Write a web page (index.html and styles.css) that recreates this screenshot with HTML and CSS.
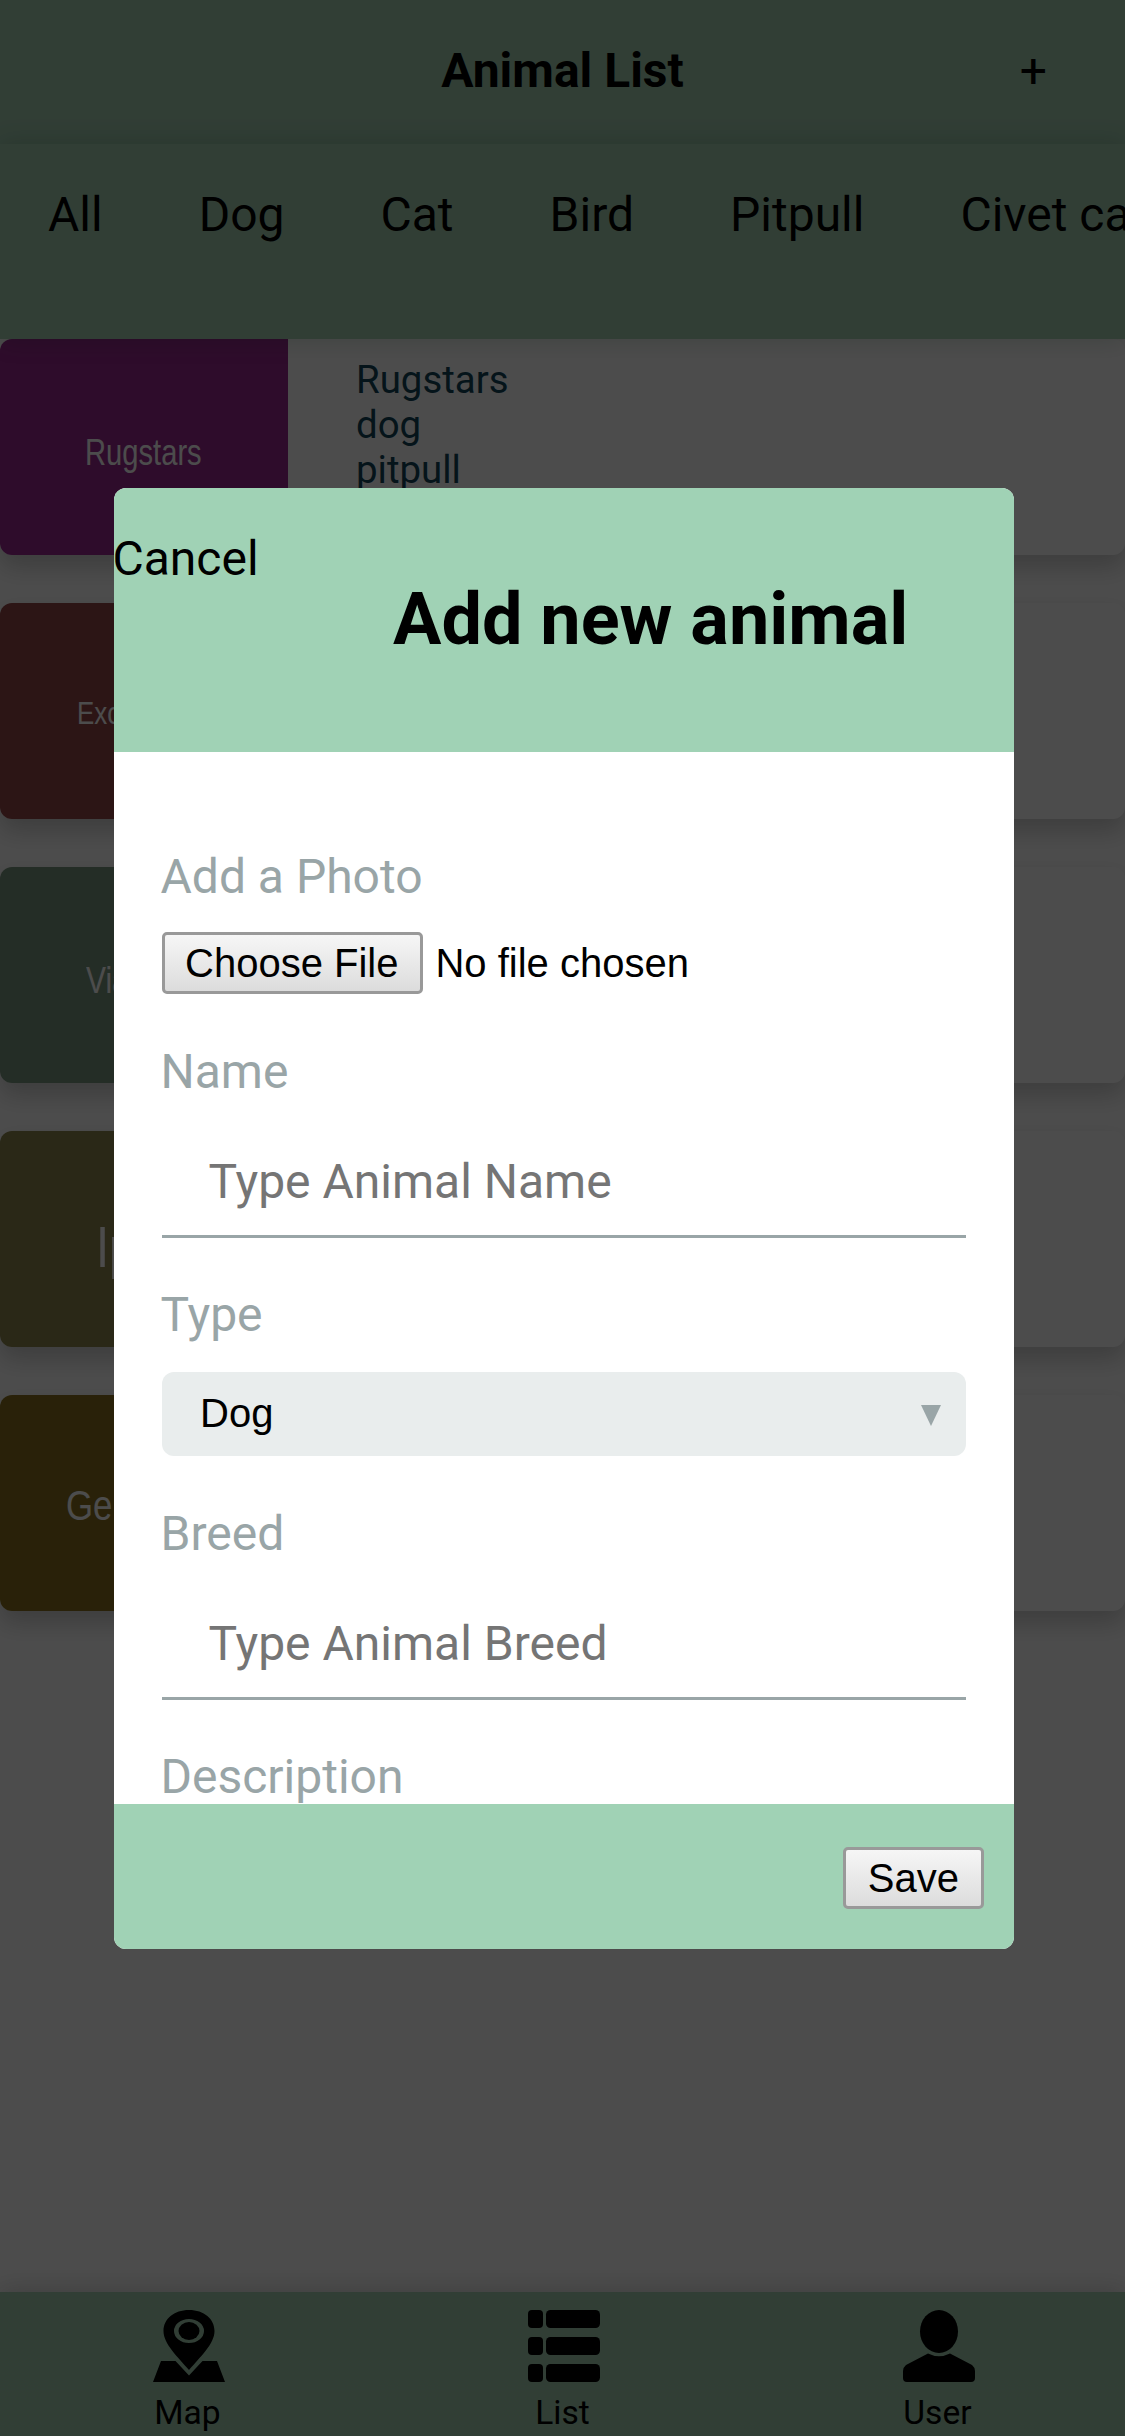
FILE: index.html
```html
<!DOCTYPE html>
<html lang="en">
<head>
<meta charset="utf-8">
<title>Animal List</title>
<link rel="stylesheet" href="styles.css">
</head>
<body>
<div class="app">
  <header class="topbar">
    <h1 class="topbar-title">Animal List</h1>
    <span class="topbar-add">+</span>
  </header>
  <nav class="filters">
    <span>All</span><span>Dog</span><span>Cat</span><span>Bird</span><span>Pitpull</span><span>Civet cat</span>
  </nav>
  <main class="list">
    <article class="card">
      <div class="thumb thumb-purple"><span>Rugstars</span></div>
      <div class="info"><p>Rugstars</p><p>dog</p><p>pitpull</p></div>
    </article>
    <article class="card"><div class="thumb thumb-red"><span>Exc</span></div></article>
    <article class="card"><div class="thumb thumb-green"><span>Via</span></div></article>
    <article class="card"><div class="thumb thumb-olive"><span>Ip</span></div></article>
    <article class="card"><div class="thumb thumb-gold"><span>Gen</span></div></article>
  </main>
  <nav class="tabbar">
    <div class="tab">
      <svg class="tab-icon" viewBox="0 0 72 72"><path fill-rule="evenodd" d="M36 0C21 0 10.500 9 10.500 21C10.500 34 25 47 36 60C47 47 61.500 34 61.500 21C61.500 9 51 0 36 0ZM36 9A15 12 0 0 1 36 33A15 12 0 0 1 36 9Z"/><ellipse cx="36" cy="21" rx="10.500" ry="9"/><path d="M8 51H22.500L36 65.500L49.500 51H64L72 72H0Z"/></svg>
      <span>Map</span>
    </div>
    <div class="tab">
      <svg class="tab-icon" viewBox="0 0 72 72"><rect width="15" height="18" rx="4"/><rect x="18" width="54" height="18" rx="4.500"/><rect y="27" width="15" height="18" rx="4"/><rect x="18" y="27" width="54" height="18" rx="4.500"/><rect y="54" width="15" height="18" rx="4"/><rect x="18" y="54" width="54" height="18" rx="4.500"/></svg>
      <span>List</span>
    </div>
    <div class="tab">
      <svg class="tab-icon" viewBox="0 0 72 72"><ellipse cx="36" cy="21.500" rx="19" ry="21.500"/><path d="M25 43.500Q36 49 47 43.500L69 55Q72 57.500 72 61V68Q72 72 68 72H4Q0 72 0 68V61Q0 57.500 3 55Z"/></svg>
      <span>User</span>
    </div>
  </nav>
</div>
<div class="backdrop">
  <section class="modal">
    <header class="modal-head">
      <span class="cancel">Cancel</span>
      <h2 class="modal-title">Add new animal</h2>
    </header>
    <form class="modal-body">
      <label class="label">Add a Photo</label>
      <div class="file"><button type="button" class="button button-file">Choose File</button><span>No file chosen</span></div>
      <label class="label label-name">Name</label>
      <input class="input" placeholder="Type Animal Name">
      <label class="label label-type">Type</label>
      <div class="select"><span>Dog</span><svg class="arrow" viewBox="0 0 20 21"><path d="M0 0H20L10 21Z"/></svg></div>
      <label class="label label-name">Breed</label>
      <input class="input" placeholder="Type Animal Breed">
      <label class="label label-type">Description</label>
    </form>
    <footer class="modal-foot"><button type="button" class="button">Save</button></footer>
  </section>
</div>
</body>
</html>
```
FILE: styles.css
```css
* { box-sizing: border-box; }
body {
  margin: 0;
  height: 2436px;
  overflow: hidden;
  font: 48px/56px Roboto, "Liberation Sans", sans-serif;
  color: #000;
  background: #fff;
}
h1, h2, p { margin: 0; }

.app { height: 2436px; display: flex; flex-direction: column; }
.topbar {
  height: 144px;
  display: grid;
  grid-template-columns: 1fr auto 1fr;
  align-items: center;
  padding: 0 78px;
  background: #a4cfb3;
}
.topbar-title { grid-column: 2; font-size: 48px; line-height: 56px; font-weight: 700; padding-bottom: 2px; }
.topbar-add { justify-self: end; padding-bottom: 2px; }
.filters {
  position: relative;
  z-index: 1;
  height: 195px;
  display: flex;
  gap: 96px;
  padding: 43px 48px;
  white-space: nowrap;
  background: #a4cfb3;
  box-shadow: 0 0 24px rgba(0, 64, 32, .2);
}
.list { flex: 1; display: flex; flex-direction: column; gap: 48px; }
.card {
  height: 216px;
  display: flex;
  border-radius: 12px;
  background: #fff;
  box-shadow: 0 12px 24px rgba(0, 0, 0, .2);
}
.thumb {
  width: 288px;
  border-radius: 12px 0 0 12px;
  color: #fff;
  font-family: "Liberation Sans", sans-serif;
  line-height: 60px;
}
.thumb span { display: block; transform: scaleX(.81); transform-origin: left; }
.thumb-purple { background: #99288f; font-size: 36px; padding: 84px 0 0 85px; }
.thumb-red { background: #934646; font-size: 32px; padding: 80px 0 0 77px; }
.thumb-green { background: #7b967f; font-size: 37px; padding: 84px 0 0 86px; }
.thumb-olive { background: #8c854d; font-size: 58px; padding: 86px 0 0 96px; }
.thumb-gold { background: #89711e; font-size: 43px; padding: 80px 0 0 66px; }
.info { padding: 18px 0 0 68px; font-size: 38.4px; line-height: 45px; color: #124559; }

.tabbar {
  height: 144px;
  display: grid;
  grid-template-columns: repeat(3, 1fr);
  background: #a4cfb3;
  box-shadow: 0 0 24px rgba(0, 0, 0, .2);
  font-size: 33.6px;
  line-height: 40px;
}
.tab { display: flex; flex-direction: column; align-items: center; padding-top: 18px; gap: 11px; }
.tab-icon { width: 72px; height: 72px; margin-left: 3px; }

.backdrop {
  position: absolute;
  inset: 0;
  z-index: 2;
  display: flex;
  align-items: center;
  justify-content: center;
  padding-left: 3px;
  background: rgba(0, 0, 0, .7);
}
.modal {
  width: 900px;
  height: 1461px;
  display: flex;
  flex-direction: column;
  border-radius: 12px;
  overflow: hidden;
  background: #fff;
}
.modal-head { flex: none; height: 264px; padding-top: 43px; background: #a0d2b5; }
.cancel { display: block; height: 47px; margin-left: -1.5px; }
.modal-title { padding-left: 279px; font-size: 72px; line-height: 84px; font-weight: 700; }
.modal-body { flex: 1 1 0; min-height: 0; overflow: hidden; padding: 97px 48px 0; }
.label { display: block; height: 56px; margin-left: -1.5px; color: #99a5a7; }
.file {
  display: flex;
  align-items: center;
  gap: 12px;
  margin-top: 27px;
  height: 62px;
  font: 40px/46px "Liberation Sans", sans-serif;
}
.button {
  height: 62px;
  padding: 0 22px;
  border: 3px solid #999;
  border-radius: 5px;
  background: linear-gradient(#f6f6f6, #dcdcdc);
  font: 40px/46px "Liberation Sans", sans-serif;
  color: #000;
}
.button-file { padding: 0 22px 0 20px; }
.label-name { margin-top: 50px; }
.input {
  display: block;
  width: 100%;
  height: 138px;
  padding: 29px 46.5px 0;
  border: 0;
  border-bottom: 3px solid #99a5a7;
  background: none;
  font: inherit;
}
.input::placeholder { color: #757575; opacity: 1; }
.label-type { margin-top: 49px; }
.select {
  display: flex;
  align-items: center;
  justify-content: space-between;
  height: 84px;
  margin-top: 29px;
  padding: 0 25px 0 38px;
  border-radius: 12px;
  background: #e9eded;
  font: 40px/46px "Liberation Sans", sans-serif;
}
.select span { padding-bottom: 2px; }
.arrow { width: 20px; height: 21px; margin-top: 3px; fill: #99a5a7; }
.modal-foot {
  flex: none;
  height: 145px;
  display: flex;
  align-items: center;
  justify-content: flex-end;
  padding: 3px 30px 0 0;
  background: #a0d2b5;
}
```
